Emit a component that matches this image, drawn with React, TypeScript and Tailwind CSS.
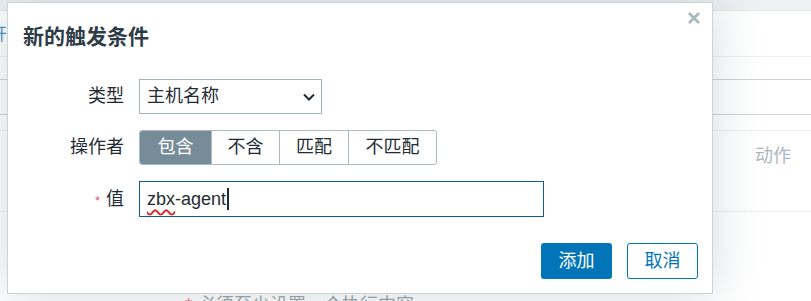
import React from 'react';

const font = { fontFamily: '"Liberation Sans", "Noto Sans CJK SC", sans-serif' };

const ops = ['包含', '不含', '匹配', '不匹配'];

function Background() {
  return (
    <div className="relative h-[301px] w-[811px] overflow-hidden bg-white">
      <div className="h-[11px] border-b border-[#e6e9ec] bg-[#eef0f2]" />
      <div className="h-[46px] border-b border-[#eef0f2] pl-0 pt-[11px]">
        <span className="text-[17px] text-[#4796c4] -ml-[10px]">开</span>
      </div>
      <div className="h-[23px] border-b border-[#cdd4d9]" />
      <div className="h-[35px] border-b border-[#cdd4d9]" />
      <div className="h-[16px] border-b border-[#eef0f2]" />
      <div className="flex h-[81px] border-b border-[#eef0f2] pl-[755px] pt-[12px]">
        <span className="text-[18px] text-[#a9b7bf]">动作</span>
      </div>
      <div className="flex pl-[185px] pt-[80px] text-[18px] text-[#9aa6ad]">
        <span className="text-[#e08b8b]">*</span>
        <span className="ml-[6px]">必须至少设置一个执行内容</span>
      </div>
    </div>
  );
}

function Dialog() {
  return (
    <div className="absolute left-[7px] top-[2px] h-[292px] w-[706px] border border-[#cdd4d9] bg-white shadow-[0_0_45px_rgba(60,80,95,0.22)]">
      <button className="absolute right-[11px] top-[8px] text-[#acbbc2]">
        <svg width="14" height="14" viewBox="0 0 14 14">
          <path d="M2 2 L12 12 M12 2 L2 12" stroke="currentColor" strokeWidth="3" />
        </svg>
      </button>
      <h2 className="pl-[15px] pt-[21px] text-[21px] font-bold leading-[26px] text-[#2e3d47]">新的触发条件</h2>

      <div className="mt-[29px] flex flex-col gap-[16px] text-[18px] text-[#1f2c33]">
        <div className="flex items-center">
          <div className="w-[131px] pr-[15px] text-right">类型</div>
          <div className="flex h-[35px] w-[183px] items-center justify-between border border-[#a3b2bb] pl-[7px] pr-[5px]">
            <span>主机名称</span>
            <svg width="14" height="10" viewBox="0 0 14 10">
              <path d="M2 2.5 L7 7.5 L12 2.5" fill="none" stroke="#1f2c33" strokeWidth="2" />
            </svg>
          </div>
        </div>

        <div className="flex items-center">
          <div className="w-[131px] pr-[15px] text-right">操作者</div>
          <div className="flex h-[35px] overflow-hidden rounded-[3px] border border-[#acbbc2]">
            {ops.map((o, i) => (
              <div
                key={o}
                className={
                  i === 0
                    ? 'flex w-[71px] items-center justify-center bg-[#768d99] text-white'
                    : i === 1
                    ? 'flex w-[68px] items-center justify-center border-l border-[#acbbc2]'
                    : i === 2
                    ? 'flex w-[69px] items-center justify-center border-l border-[#acbbc2]'
                    : 'flex w-[88px] items-center justify-center border-l border-[#acbbc2]'
                }
              >
                {o}
              </div>
            ))}
          </div>
        </div>

        <div className="flex items-center">
          <div className="w-[131px] pr-[15px] text-right">
            <span className="mr-[6px] text-[13px] text-[#e45959]">*</span>值
          </div>
          <div className="flex h-[36px] w-[405px] items-center border border-[#0f5d8c] pl-[7px]">
            <span className="underline decoration-wavy decoration-[#e02020] decoration-[1.5px] underline-offset-[4px]">zbx</span>
            <span>-agent</span>
            <span className="ml-[1px] h-[22px] w-[2px] bg-[#1f2c33]" />
          </div>
        </div>
      </div>

      <div className="absolute bottom-[14px] right-[14px] flex gap-[15px] text-[18px]">
        <button className="h-[36px] w-[71px] rounded-[3px] bg-[#0275b8] text-white">添加</button>
        <button className="h-[36px] w-[71px] rounded-[3px] border border-[#0275b8] bg-white text-[#0275b8]">取消</button>
      </div>
    </div>
  );
}

export default function App() {
  return (
    <div className="relative h-[301px] w-[811px] overflow-hidden" style={font}>
      <Background />
      <Dialog />
    </div>
  );
}
